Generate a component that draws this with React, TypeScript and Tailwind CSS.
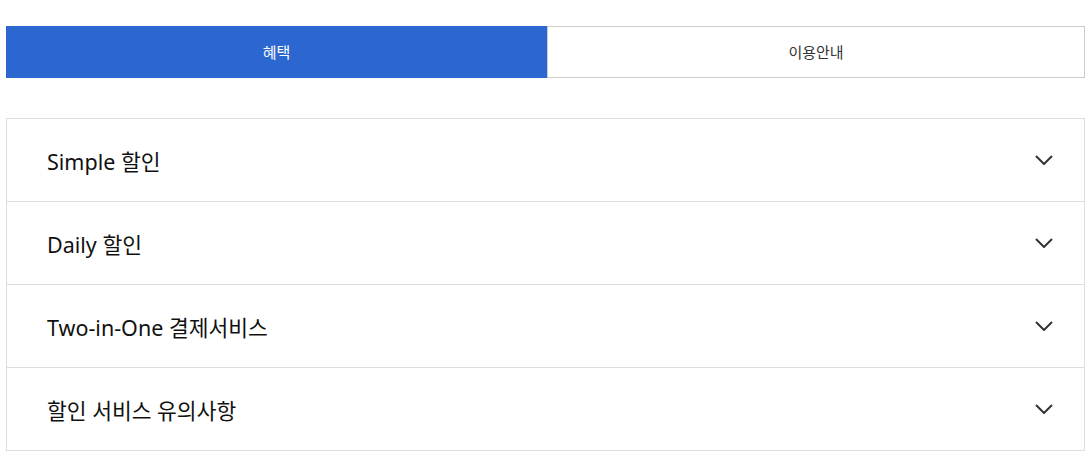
import { useState } from "react";

const tabs = ["혜택", "이용안내"];

const items = [
  "Simple 할인",
  "Daily 할인",
  "Two-in-One 결제서비스",
  "할인 서비스 유의사항",
];

function Chevron() {
  return (
    <svg width="18" height="10" viewBox="0 0 18 10" fill="none">
      <path d="M1 1l8 8 8-8" stroke="#333" strokeWidth="2" />
    </svg>
  );
}

export default function App() {
  const [active, setActive] = useState(0);

  return (
    <div
      className="bg-white w-[1090px] h-[472px] pt-[26px] pl-[6px] pr-[5px]"
      style={{ fontFamily: '"Noto Sans", "Noto Sans CJK KR", sans-serif' }}
    >
      <div className="flex h-[52px]">
        {tabs.map((tab, i) => (
          <button
            key={tab}
            onClick={() => setActive(i)}
            className={
              i === active
                ? "w-[541px] flex items-center justify-center bg-[#2c66d0] text-white text-[15px]"
                : "flex-1 flex items-center justify-center bg-white border border-[#cccccc] text-[#333] text-[15px]"
            }
          >
            {tab}
          </button>
        ))}
      </div>

      <div className="mt-[40px] border border-[#dddddd]">
        {items.map((item, i) => (
          <div
            key={item}
            className={
              i === 0
                ? "flex items-center justify-between h-[82px] pl-[40px] pr-[31px]"
                : "flex items-center justify-between h-[83px] pl-[40px] pr-[31px] border-t border-[#dddddd]"
            }
          >
            <span className="text-[21.5px] text-[#111] pt-[4px]">{item}</span>
            <Chevron />
          </div>
        ))}
      </div>
    </div>
  );
}
